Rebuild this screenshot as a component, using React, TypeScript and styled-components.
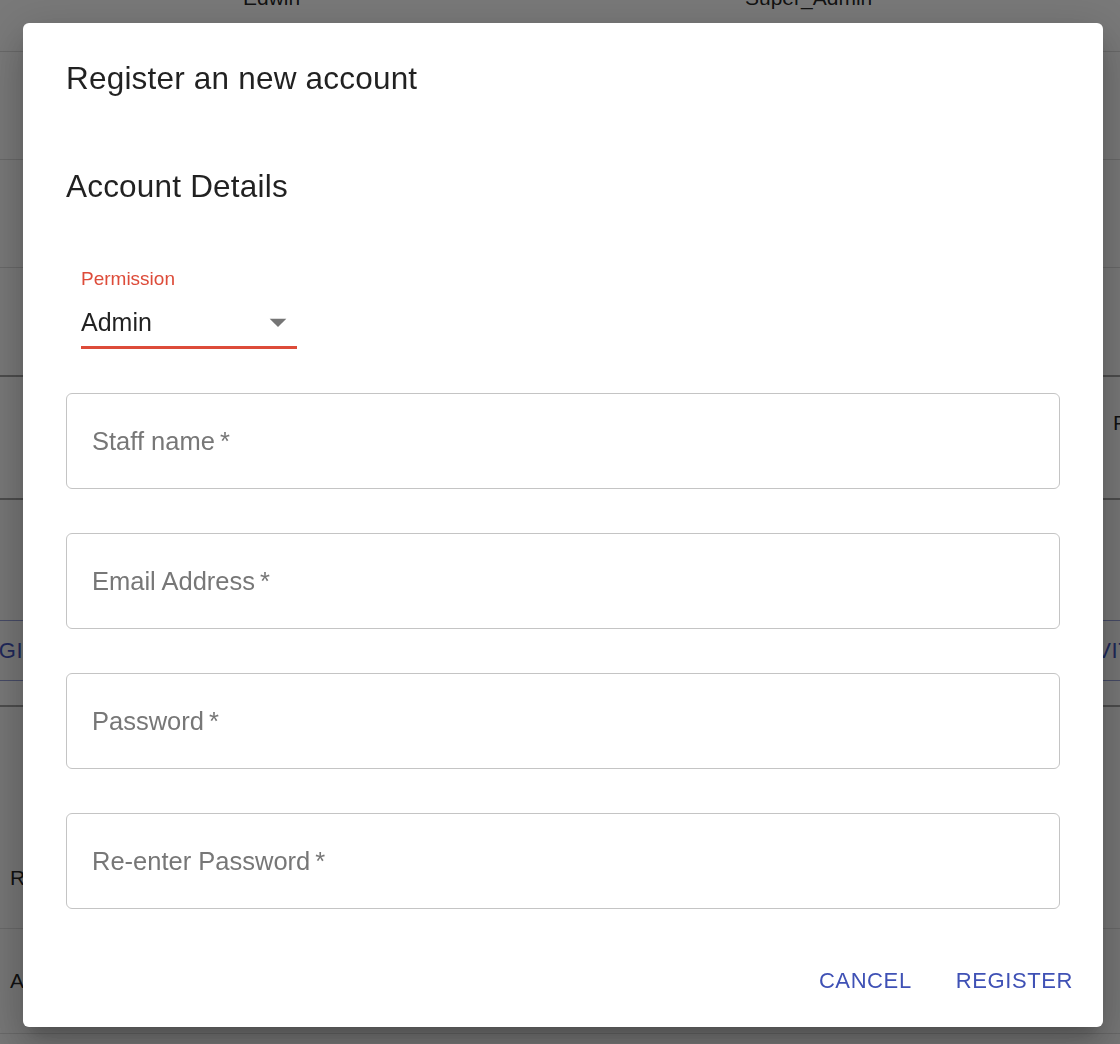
import React from "react";
import styled, { createGlobalStyle } from "styled-components";

const GlobalStyle = createGlobalStyle`
  html, body { margin: 0; padding: 0; }
  body {
    width: 1120px;
    height: 1044px;
    overflow: hidden;
    background: #eeeeee;
    font-family: "Liberation Sans", Arial, Helvetica, sans-serif;
  }
  * { box-sizing: border-box; }
`;

/* ---------- background page (behind the dialog) ---------- */

const Page = styled.div`
  width: 1120px;
  margin-top: -56px;
  display: flex;
  flex-direction: column;
  color: rgba(0, 0, 0, 0.87);
  font-size: 21px;
  overflow: hidden;
`;

const Card = styled.div<{ $edge?: boolean }>`
  background: #f2f2f2;
  display: flex;
  flex-direction: column;
  border-bottom: ${(p) => (p.$edge ? "2px solid #9a9a9a" : "none")};
`;

const TableRow = styled.div<{ $h: number; $line?: boolean; $align?: string }>`
  height: ${(p) => p.$h}px;
  display: flex;
  align-items: ${(p) => p.$align || "center"};
  border-bottom: ${(p) => (p.$line ? "1px solid #d2d2d2" : "none")};
  white-space: nowrap;
`;

const Cell = styled.span<{ $w: number }>`
  flex: 0 0 ${(p) => p.$w}px;
  line-height: 24px;
`;

const Gap = styled.div<{ $h: number }>`
  height: ${(p) => p.$h}px;
`;

const ButtonBand = styled.div`
  height: 61px;
  margin-top: 92px;
  border-top: 1px solid rgba(63, 81, 181, 0.55);
  border-bottom: 1px solid rgba(63, 81, 181, 0.55);
  display: flex;
  align-items: center;
  white-space: nowrap;
  color: #3f51b5;
  font-size: 22px;
  letter-spacing: 0.6px;
`;

const BandText = styled.span<{ $w: number; $ml?: number }>`
  flex: 0 0 ${(p) => p.$w}px;
  margin-left: ${(p) => p.$ml || 0}px;
`;

/* ---------- dialog ---------- */

const Backdrop = styled.div`
  position: fixed;
  inset: 0;
  background: rgba(0, 0, 0, 0.5);
  display: flex;
  justify-content: center;
  align-items: flex-start;
  padding: 23px 0 0 6px;
`;

const Dialog = styled.div`
  width: 1080px;
  background: #ffffff;
  border-radius: 6px;
  box-shadow: 0px 11px 15px -7px rgba(0, 0, 0, 0.2),
    0px 24px 38px 3px rgba(0, 0, 0, 0.14), 0px 9px 46px 8px rgba(0, 0, 0, 0.12);
  padding: 35px 43px 19px 43px;
  display: flex;
  flex-direction: column;
  color: rgba(0, 0, 0, 0.87);
`;

const Heading = styled.h2<{ $mt?: number }>`
  margin: ${(p) => p.$mt || 0}px 0 0 0;
  font-size: 31.5px;
  line-height: 40px;
  font-weight: 400;
  letter-spacing: 0.2px;
  color: rgba(0, 0, 0, 0.87);
`;

const SelectField = styled.div`
  margin: 61px 0 0 15px;
  width: 216px;
  display: flex;
  flex-direction: column;
`;

const SelectLabel = styled.label`
  font-size: 19px;
  line-height: 24px;
  color: #dd4b39;
`;

const SelectControl = styled.div`
  margin-top: 16px;
  padding-bottom: 9px;
  border-bottom: 3px solid #dd4b39;
  display: flex;
  align-items: center;
  justify-content: space-between;
  height: 42px;
`;

const SelectValue = styled.span`
  font-size: 25px;
  line-height: 30px;
  color: rgba(0, 0, 0, 0.87);
`;

const ArrowIcon = styled.svg`
  width: 40px;
  height: 40px;
  margin-right: -1px;
  fill: #757575;
`;

const Fields = styled.div`
  margin-top: 44px;
  display: flex;
  flex-direction: column;
  gap: 44px;
`;

const OutlinedField = styled.div`
  height: 96px;
  border: 1px solid #c4c4c4;
  border-radius: 6px;
  display: flex;
  align-items: center;
  padding-left: 25px;
`;

const FieldLabel = styled.span`
  font-size: 25.5px;
  line-height: 30px;
  color: #777777;
`;

const Actions = styled.div`
  margin-top: 45px;
  margin-right: -25px;
  display: flex;
  justify-content: flex-end;
  gap: 20px;
`;

const TextButton = styled.button`
  height: 54px;
  padding: 0 12px;
  border: none;
  background: transparent;
  font-family: "Liberation Sans", Arial, Helvetica, sans-serif;
  font-size: 22px;
  letter-spacing: 0.6px;
  text-transform: uppercase;
  color: #3f51b5;
  cursor: pointer;
`;

const fields = ["Staff name", "Email Address", "Password", "Re-enter Password"];

export default function App() {
  return (
    <>
      <GlobalStyle />
      <Page>
        <Card $edge>
          <TableRow $h={108} $line>
            <Cell $w={243} />
            <Cell $w={502}>Edwin</Cell>
            <Cell $w={300}>Super_Admin</Cell>
          </TableRow>
          <TableRow $h={108} $line />
          <TableRow $h={108} $line />
          <TableRow $h={107} />
        </Card>
        <Card $edge>
          <TableRow $h={121} $align="flex-start">
            <Cell $w={1113} />
            <Cell $w={120} style={{ marginTop: 34 }}>Full name</Cell>
          </TableRow>
        </Card>
        <Gap $h={28} />
        <ButtonBand>
          <BandText $w={1106} $ml={-33}>REGISTER</BandText>
          <BandText $w={120}>INVITE</BandText>
        </ButtonBand>
        <Card $edge>
          <Gap $h={24} />
        </Card>
        <TableRow $h={222} $line $align="flex-end">
          <Cell $w={300} style={{ marginLeft: 10, marginBottom: 38 }}>Role</Cell>
        </TableRow>
        <TableRow $h={105} $line>
          <Cell $w={300} style={{ marginLeft: 10 }}>Admin</Cell>
        </TableRow>
      </Page>

      <Backdrop>
        <Dialog role="dialog" aria-labelledby="dlg-title">
          <Heading id="dlg-title">Register an new account</Heading>
          <Heading $mt={68}>Account Details</Heading>

          <SelectField>
            <SelectLabel>Permission</SelectLabel>
            <SelectControl>
              <SelectValue>Admin</SelectValue>
              <ArrowIcon viewBox="0 0 24 24" aria-hidden="true">
                <path d="M7 10l5 5 5-5z" />
              </ArrowIcon>
            </SelectControl>
          </SelectField>

          <Fields>
            {fields.map((f) => (
              <OutlinedField key={f}>
                <FieldLabel>
                  {f}
                  {"\u2009*"}
                </FieldLabel>
              </OutlinedField>
            ))}
          </Fields>

          <Actions>
            <TextButton>Cancel</TextButton>
            <TextButton>Register</TextButton>
          </Actions>
        </Dialog>
      </Backdrop>
    </>
  );
}
